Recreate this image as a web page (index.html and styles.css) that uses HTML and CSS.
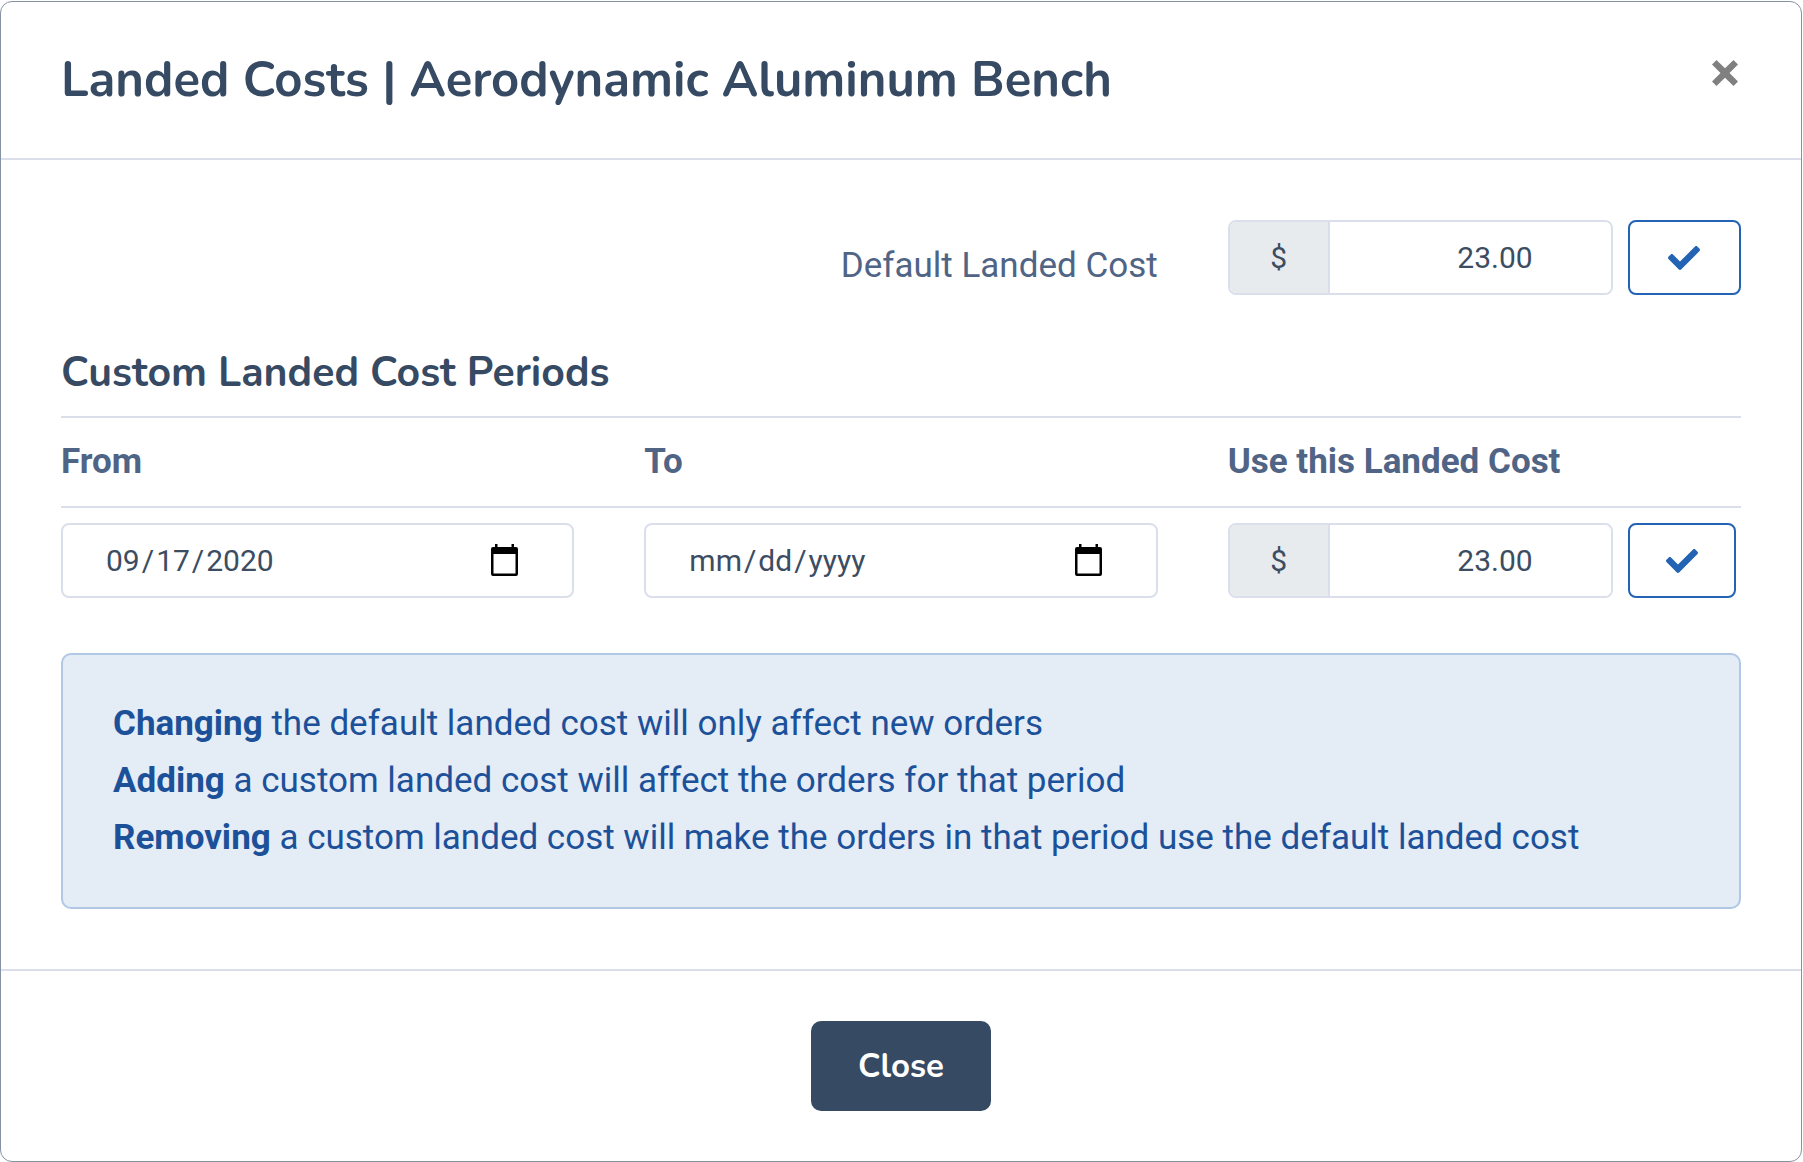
FILE: index.html
```html
<!DOCTYPE html>
<html lang="en-US">
<head>
  <meta charset="utf-8">
  <meta name="viewport" content="width=device-width, initial-scale=1">
  <title>Landed Costs</title>
  <link rel="stylesheet" href="styles.css">
</head>
<body>
  <svg class="symbols" aria-hidden="true">
    <symbol id="check" viewBox="0 65 512 382">
      <path d="M173.898 439.404l-166.4-166.4c-9.997-9.997-9.997-26.206 0-36.204l36.203-36.204c9.997-9.998 26.207-9.998 36.204 0L192 312.69 432.095 72.596c9.997-9.997 26.207-9.997 36.204 0l36.203 36.204c9.997 9.997 9.997 26.206 0 36.204l-294.4 294.401c-9.998 9.997-26.207 9.997-36.204-.001z"/>
    </symbol>
  </svg>
  <main class="modal" role="dialog" aria-labelledby="modal-title">
    <header class="modal-header">
      <h1 class="modal-title" id="modal-title">Landed Costs | Aerodynamic Aluminum Bench</h1>
      <button class="dismiss" type="button" aria-label="Dismiss">
        <svg class="dismiss-icon" viewBox="0 0 26 26" aria-hidden="true"><path d="M4.500 0L13 8.200 21.500 0 26 4.500 17.500 13 26 21.500 21.500 26 13 17.800 4.500 26 0 21.500 8.500 13 0 4.500z"/></svg>
      </button>
    </header>

    <form class="modal-body">
      <div class="row">
        <label class="default-label" for="default-cost">Default Landed Cost</label>
        <div class="cost">
          <div class="input-group">
            <span class="addon">$</span>
            <input class="amount" id="default-cost" type="text" inputmode="decimal" value="23.00">
          </div>
          <button class="save save-wide" type="button" aria-label="Save default cost"><svg class="check"><use href="#check"/></svg></button>
        </div>
      </div>

      <h2 class="section-title">Custom Landed Cost Periods</h2>
      <div class="row period-head">
        <label for="from">From</label>
        <label for="to">To</label>
        <label for="period-cost">Use this Landed Cost</label>
      </div>
      <div class="row period">
        <input class="date" id="from" type="date" value="2020-09-17">
        <input class="date" id="to" type="date">
        <div class="cost">
          <div class="input-group">
            <span class="addon">$</span>
            <input class="amount" id="period-cost" type="text" inputmode="decimal" value="23.00">
          </div>
          <button class="save" type="button" aria-label="Save period cost"><svg class="check"><use href="#check"/></svg></button>
        </div>
      </div>

      <div class="notice">
        <p><strong>Changing</strong> the default landed cost will only affect new orders</p>
        <p><strong>Adding</strong> a custom landed cost will affect the orders for that period</p>
        <p><strong>Removing</strong> a custom landed cost will make the orders in that period use the default landed cost</p>
      </div>
    </form>

    <footer class="modal-footer">
      <button class="close-button" type="button">Close</button>
    </footer>
  </main>
</body>
</html>
```
FILE: styles.css
```css
* { box-sizing: border-box; }

body {
  margin: 0;
  padding: 1px 1px 0 0;
  background: #fff;
  color: #506486;
  font: 35px/57px Roboto, "Liberation Sans", sans-serif;
}

h1, h2, p { margin: 0; }
button, input { font: inherit; }
.symbols { display: none; }

.modal {
  border: 1px solid #8492a2;
  border-radius: 12px;
  background: #fff;
}

.modal-header {
  display: flex;
  justify-content: space-between;
  align-items: flex-start;
  padding: 48px 60px 48px;
  border-bottom: 2px solid #dadfeb;
}

.modal-title,
.section-title,
.close-button {
  font-family: Nunito, Lato, sans-serif;
}

.modal-title {
  color: #364a63;
  font-size: 49px;
  line-height: 60px;
  font-weight: 700;
}

.dismiss {
  display: flex;
  margin-top: 6px;
  padding: 4px 3px;
  border: 0;
  background: none;
}

.dismiss-icon { width: 26px; height: 26px; fill: #808080; }

.modal-body { padding: 60px; }

.row {
  display: grid;
  grid-template-columns: repeat(3, minmax(0, 1fr));
  column-gap: 70px;
}

.default-label {
  grid-column: 1 / 3;
  padding-top: 17px;
  text-align: right;
}

.cost {
  display: flex;
  gap: 15px;
}

.input-group {
  display: flex;
  flex: none;
  width: 75%;
  height: 75px;
  border: 2px solid #dadfeb;
  border-radius: 8px;
  overflow: hidden;
  color: #3c4d62;
  font-size: 30px;
}

.addon {
  display: flex;
  align-items: center;
  justify-content: center;
  width: 100px;
  border-right: 2px solid #dadfeb;
  background: #e7ebee;
}

.amount {
  flex: 1;
  min-width: 0;
  padding: 0 78px 0 20px;
  border: 0;
  background: #fff;
  color: inherit;
  text-align: right;
}

.save {
  display: flex;
  align-items: center;
  justify-content: center;
  width: 108px;
  height: 75px;
  padding: 0;
  border: 2px solid #2263b3;
  border-radius: 8px;
  background: #fff;
}

.save-wide { width: auto; flex: 1; }

.check { width: 32px; height: 24px; fill: #2263b3; }

.section-title {
  margin-top: 48px;
  padding-bottom: 13px;
  border-bottom: 2px solid #dadfeb;
  color: #364a63;
  font-size: 41px;
  line-height: 60px;
  font-weight: 700;
}

.period-head {
  padding: 15px 0 16px;
  border-bottom: 2px solid #dadfeb;
  font-weight: 700;
}

.period { padding-top: 15px; }

.date {
  width: 100%;
  height: 75px;
  padding: 0 54px 0 41px;
  border: 2px solid #dadfeb;
  border-radius: 8px;
  background: #fff;
  color: #3c4d62;
  font-size: 30px;
}

.date::-webkit-datetime-edit-month-field,
.date::-webkit-datetime-edit-day-field,
.date::-webkit-datetime-edit-year-field {
  padding: 0 2px;
}

.date::-webkit-calendar-picker-indicator {
  width: 27px;
  height: 34px;
  padding: 0;
  background: url("data:image/svg+xml,%3Csvg xmlns='http://www.w3.org/2000/svg' viewBox='0 0 27 34'%3E%3Cpath fill='%23000' fill-rule='evenodd' d='M4 0h2.500v3h14V0H23v3h2q2 0 2 2v25q0 2-2 2H2q-2 0-2-2V5q0-2 2-2h2zM2.500 10v19.500h22V10z'/%3E%3C/svg%3E") center / 100% 100% no-repeat;
}

.notice {
  margin-top: 55px;
  padding: 40px 50px 41px;
  border: 2px solid #b0c7e6;
  border-radius: 10px;
  background: #e4ecf6;
  color: #1c5199;
}

.modal-footer {
  display: flex;
  justify-content: center;
  padding: 50px 60px;
  border-top: 2px solid #dadfeb;
}

.close-button {
  min-width: 180px;
  height: 90px;
  padding: 0 45px;
  border: 0;
  border-radius: 10px;
  background: #364a63;
  color: #fff;
  font-size: 33px;
  font-weight: 700;
}
```
